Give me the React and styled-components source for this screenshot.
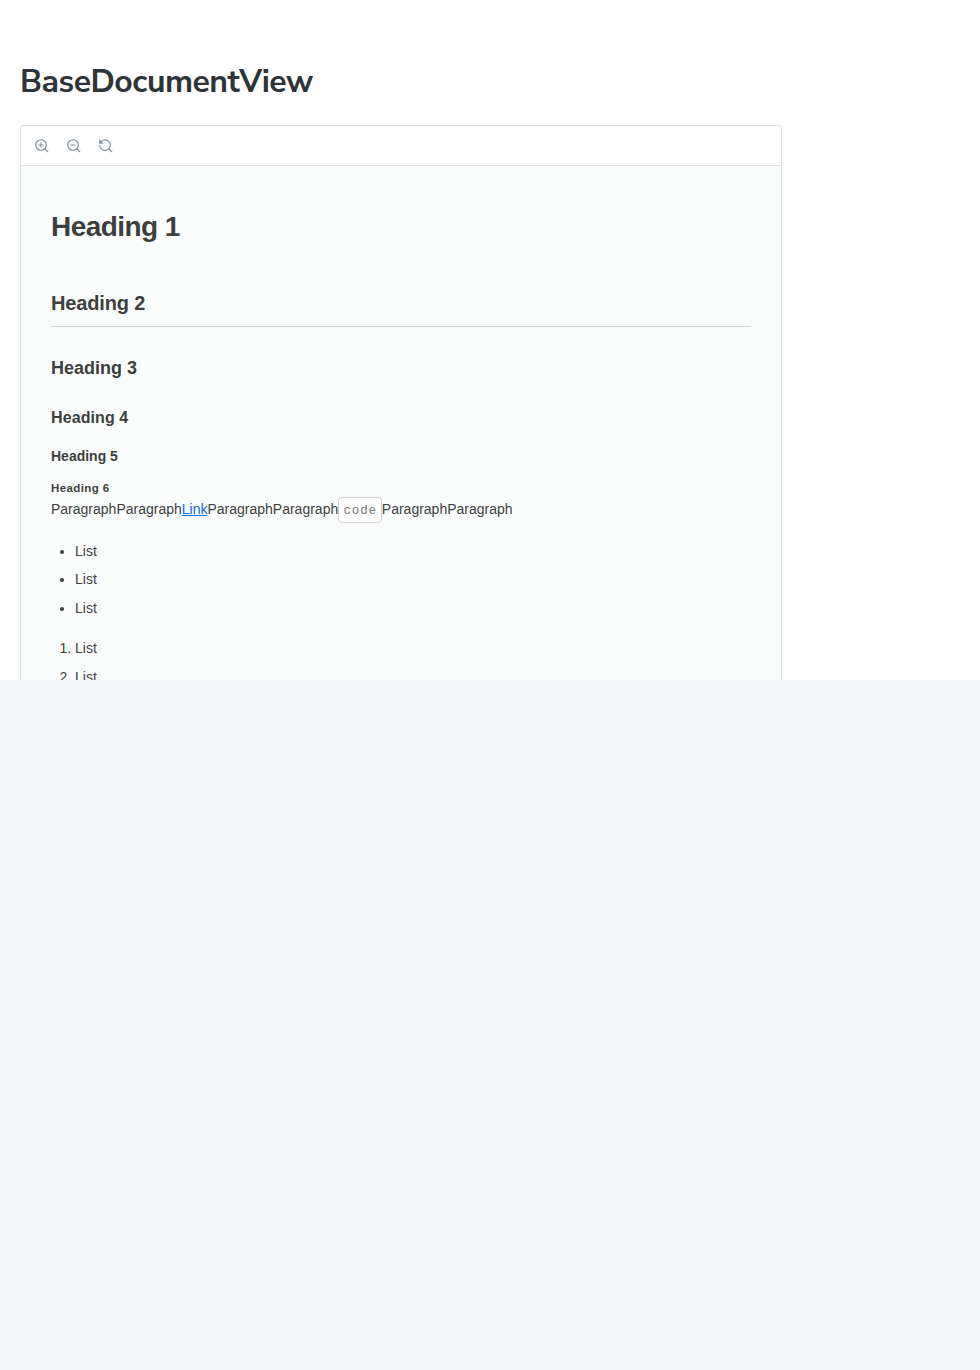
import React from 'react';
import styled, { createGlobalStyle } from 'styled-components';

const Global = createGlobalStyle`
  * { box-sizing: border-box; }
  body { margin: 0; background: #f6f9fc; }
`;
const Story = styled.main`
  height: 680px;
  padding: 61px 20px 0;
  overflow: hidden;
  background: #fff;
`;
const Title = styled.h1`
  margin: 0 0 22px;
  font: 700 32px/42px "Nunito Sans", Nunito, "Open Sans", sans-serif;
  letter-spacing: -0.5px;
  color: #2e3438;
`;
const Viewer = styled.section`
  width: 762px;
  height: 700px;
  border: 1px solid #dde1e6;
  border-radius: 4px;
  background: #fff;
  box-shadow: 0 1px 4px rgba(60, 80, 110, 0.1);
  overflow: hidden;
`;
const Toolbar = styled.div`
  display: flex;
  gap: 16px;
  align-items: center;
  height: 40px;
  padding: 0 13px;
  border-bottom: 1px solid #dde1e6;
`;
const IconButton = styled.button`
  display: flex;
  width: 16px;
  height: 16px;
  padding: 0;
  border: 0;
  background: none;
  color: #7b8a96;
`;
const Doc = styled.article`
  height: 660px;
  padding: 41px 30px 0;
  background: #fbfdfc;
  color: #3d3f3f;
  font: 14px/24px "Liberation Sans", Arial, sans-serif;
`;
const Heading = styled.div`
  margin: 0 0 ${(p) => p.$gap}px;
  padding-bottom: ${(p) => (p.$rule ? 9 : 0)}px;
  font-weight: 700;
  font-size: ${(p) => p.$size}px;
  line-height: ${(p) => p.$line}px;
  letter-spacing: ${(p) => p.$tracking || 0}px;
  ${(p) => p.$rule && 'border-bottom: 1px solid #d2d4d3;'}
`;
const Paragraph = styled.p`
  height: 24px;
  margin: -1px 0 0;
`;
const Link = styled.a`
  color: #0969e8;
`;
const Code = styled.code`
  padding: 6px 3.8px 4px 4.2px;
  border: 1px solid #d0d2d1;
  border-radius: 4px;
  background: #fff;
  color: #777;
  font: 12.5px "Liberation Mono", monospace;
  letter-spacing: 0.9px;
`;
const List = styled.ul`
  margin: ${(p) => p.$top}px 0 0;
  padding-left: 24px;
  line-height: 28.5px;
`;

const Icon = ({ children }) => (
  <svg width="16" height="16" viewBox="0 0 16 16" fill="none" stroke="currentColor" strokeWidth="1.1">{children}</svg>
);

export default function App() {
  return (
    <>
      <Global />
      <Story>
        <Title>BaseDocumentView</Title>
        <Viewer>
          <Toolbar>
            <IconButton aria-label="Zoom in"><Icon><circle cx="7" cy="7" r="5.3" /><path d="M4.5 7h5M7 4.5v5M10.8 10.8l3.4 3.4" /></Icon></IconButton>
            <IconButton aria-label="Zoom out"><Icon><circle cx="7" cy="7" r="5.3" /><path d="M4.5 7h5M10.8 10.8l3.4 3.4" /></Icon></IconButton>
            <IconButton aria-label="Reset zoom"><Icon><path d="M3.3 3.3a5.3 5.3 0 1 1-1.6 3.9M10.8 10.8l3.4 3.4" /><path d="M1.4 1.8v3.6h3.6z" fill="currentColor" strokeWidth="0.5" /></Icon></IconButton>
          </Toolbar>
          <Doc>
            <Heading as="h1" $size={28} $line={40} $gap={42} $tracking={-0.56}>Heading 1</Heading>
            <Heading as="h2" $size={20} $line={28} $gap={25} $tracking={-0.15} $rule>Heading 2</Heading>
            <Heading as="h3" $size={18} $line={32} $gap={20}>Heading 3</Heading>
            <Heading as="h4" $size={16} $line={28} $gap={12} $tracking={0.1}>Heading 4</Heading>
            <Heading as="h5" $size={14} $line={24} $gap={10}>Heading 5</Heading>
            <Heading as="h6" $size={11.5} $line={20} $gap={0} $tracking={0.4}>Heading 6</Heading>
            <Paragraph>ParagraphParagraph<Link href="#">Link</Link>ParagraphParagraph<Code>code</Code>ParagraphParagraph</Paragraph>
            <List $top={15.6}><li>List</li><li>List</li><li>List</li></List>
            <List as="ol" $top={12}><li>List</li><li>List</li></List>
          </Doc>
        </Viewer>
      </Story>
    </>
  );
}
